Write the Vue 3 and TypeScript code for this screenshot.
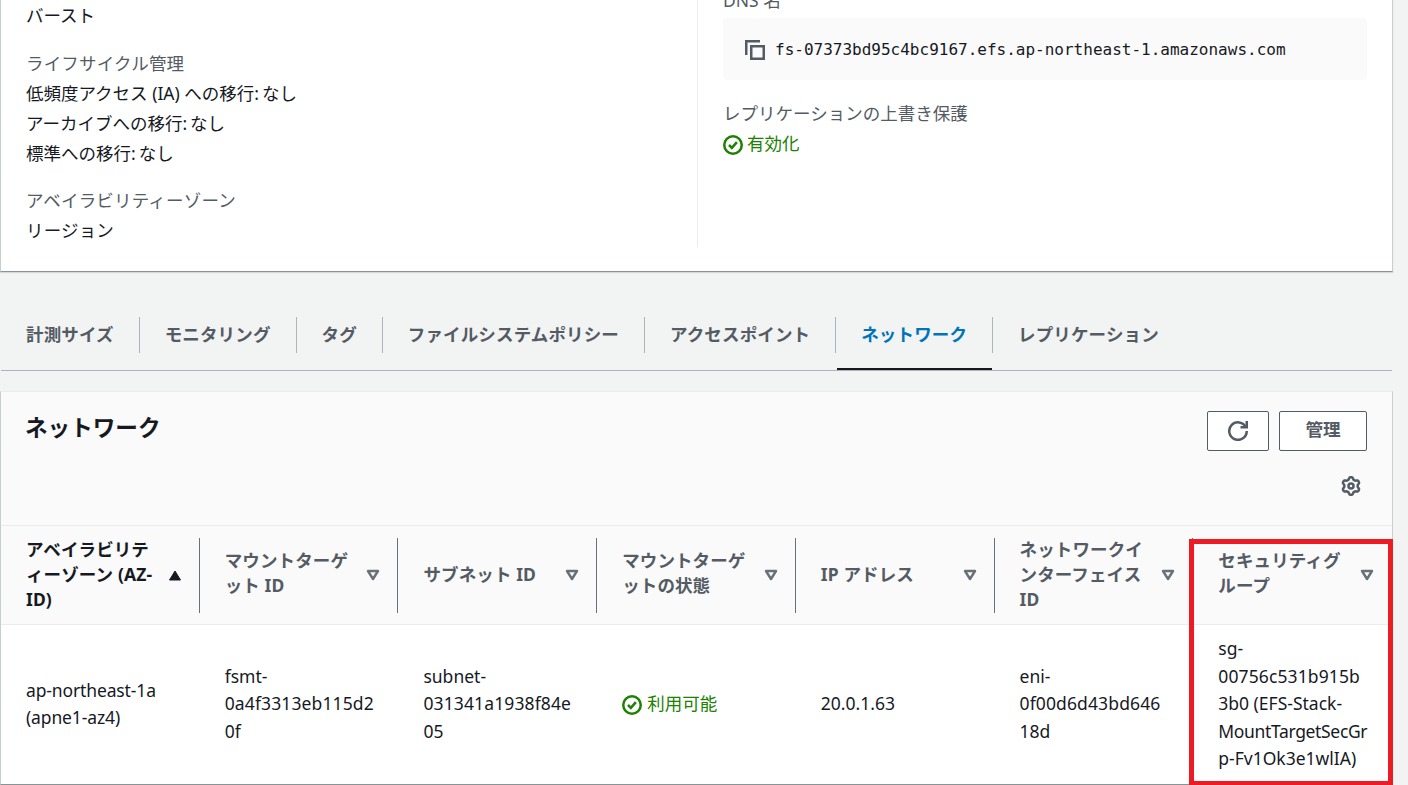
<script setup lang="ts">
interface Column {
  header: string[]
  cell: string[]
  status?: boolean
  sorted?: boolean
}

const tabs: string[] = [
  '計測サイズ', 'モニタリング', 'タグ', 'ファイルシステムポリシー',
  'アクセスポイント', 'ネットワーク', 'レプリケーション',
]
const activeTab = 'ネットワーク'

const columns: Column[] = [
  { header: ['アベイラビリテ', 'ィーゾーン (AZ-', 'ID)'], cell: ['ap-northeast-1a', '(apne1-az4)'], sorted: true },
  { header: ['マウントターゲ', 'ット ID'], cell: ['fsmt-', '0a4f3313eb115d2', '0f'] },
  { header: ['サブネット ID'], cell: ['subnet-', '031341a1938f84e', '05'] },
  { header: ['マウントターゲ', 'ットの状態'], cell: ['利用可能'], status: true },
  { header: ['IP アドレス'], cell: ['20.0.1.63'] },
  { header: ['ネットワークイ', 'ンターフェイス', 'ID'], cell: ['eni-', '0f00d6d43bd646', '18d'] },
  { header: ['セキュリティグ', 'ループ'], cell: ['sg-', '00756c531b915b', '3b0 (EFS-Stack-', 'MountTargetSecGr', 'p-Fv1Ok3e1wlIA)'] },
]

// Hash-like fragments are set slightly wider, letter-heavy names slightly tighter.
const tracking = (line: string): string => {
  if (/^[0-9a-f]{12,}$/.test(line)) return 'wide'
  if (line.startsWith('Mount')) return 'tight'
  if (line.startsWith('ap-') || line.startsWith('(apne')) return 'snug'
  return ''
}

// Outline of the six-lobed settings gear, in a 16-unit box.
const gearPath = (() => {
  const points = Array.from({ length: 72 }, (_, i) => {
    const t = (i * 5 * Math.PI) / 180
    const r = 6.2 + 0.95 * Math.tanh(1.6 * Math.cos(6 * t))
    return `${(8 + r * Math.sin(t)).toFixed(2)} ${(8 - r * Math.cos(t)).toFixed(2)}`
  })
  return `M${points.join('L')}Z`
})()
</script>

<template>
  <main class="page">
    <section class="card details">
      <div class="col left">
        <div class="value">バースト</div>
        <div class="group">
          <div class="label spaced">ライフサイクル管理</div>
          <div class="value">低頻度アクセス (IA) への移行<span class="colon">: </span>なし</div>
          <div class="value">アーカイブへの移行<span class="colon">: </span>なし</div>
          <div class="value">標準への移行<span class="colon">: </span>なし</div>
        </div>
        <div class="group second">
          <div class="label spaced">アベイラビリティーゾーン</div>
          <div class="value spaced">リージョン</div>
        </div>
      </div>
      <div class="col right">
        <div class="label dns">DNS 名</div>
        <div class="code">
          <svg class="icon" viewBox="0 0 16 16"><path d="M1 12V1h11M5 5h10v10H5z" /></svg>
          <span>fs-07373bd95c4bc9167.efs.ap-northeast-1.amazonaws.com</span>
        </div>
        <div class="label protect">レプリケーションの上書き保護</div>
        <div class="ok upper">
          <svg class="icon" viewBox="0 0 16 16"><circle cx="8" cy="8" r="7" /><path d="m4.8 8 2.3 2.3 4-4.6" /></svg>
          <span>有効化</span>
        </div>
      </div>
    </section>

    <nav class="tabs">
      <div v-for="t in tabs" :key="t" class="tab" :class="{ active: t === activeTab }"><span>{{ t }}</span></div>
    </nav>

    <section class="card network">
      <header class="head">
        <h2>ネットワーク</h2>
        <div class="tools">
          <div class="buttons">
            <button class="refresh">
              <svg class="icon" viewBox="0 0 16 16"><path d="M10 5h5V0" /><path d="M15 8a7 7 0 1 1-.7-3" /></svg>
            </button>
            <button class="manage">管理</button>
          </div>
          <svg class="icon gear" viewBox="0 0 16 16"><path :d="gearPath" /><circle cx="8" cy="8" r="2" /></svg>
        </div>
      </header>
      <div class="grid header-row">
        <div v-for="(c, i) in columns" :key="i" class="th" :class="{ sorted: c.sorted }">
          <div class="lines" :class="{ double: c.header.length === 2 }"><div v-for="l in c.header" :key="l">{{ l }}</div></div>
          <svg v-if="c.sorted" class="caret up" viewBox="0 0 14 12"><path d="M7 2 12.5 11h-11z" /></svg>
          <svg v-else class="caret" viewBox="0 0 14 12"><path d="M2 2h10L7 10z" /></svg>
        </div>
      </div>
      <div class="grid body-row">
        <div v-for="(c, i) in columns" :key="i" class="td">
          <div v-if="c.status" class="ok">
            <svg class="icon" viewBox="0 0 16 16"><circle cx="8" cy="8" r="7" /><path d="m4.8 8 2.3 2.3 4-4.6" /></svg>
            <span>{{ c.cell[0] }}</span>
          </div>
          <div v-else class="lines"><div v-for="l in c.cell" :key="l" :class="tracking(l)">{{ l }}</div></div>
        </div>
      </div>
    </section>
    <div class="highlight"></div>
  </main>
</template>

<style>
body {
  background: #f2f3f3;
  overflow: hidden;
}
</style>

<style scoped>
.page {
  position: relative;
  box-sizing: border-box;
  width: 1408px;
  height: 785px;
  overflow: hidden;
  background: #f2f3f3;
  color: #16191f;
  font: 17.5px/30px "Noto Sans", "Noto Sans CJK JP", sans-serif;
  white-space: nowrap;
}
.card {
  box-sizing: border-box;
  width: 1393px;
  background: #fff;
  border: solid #c9cece;
  border-width: 0 1px;
}
.details {
  display: flex;
  height: 272px;
  border-bottom: 1px solid #879596;
  box-shadow: 0 1px 1px #d5d9d9;
}
.col {
  box-sizing: border-box;
  height: 247px;
}
.left {
  width: 697px;
  padding-left: 25px;
  border-right: 1px solid #eaeded;
}
.right {
  width: 669px;
  padding-left: 25px;
}
.label {
  color: #545b64;
}
.spaced {
  letter-spacing: 0.18px;
}
.colon {
  letter-spacing: -0.8px;
}
.group {
  margin-top: 18px;
}
.group.second {
  margin-top: 17px;
}
.dns {
  margin-top: -15px;
}
.code {
  display: flex;
  align-items: center;
  gap: 10px;
  box-sizing: border-box;
  height: 62px;
  margin-top: 3px;
  padding: 2px 22px 0;
  border-radius: 4px;
  background: #fafafa;
  font: 16px/30px "DejaVu Sans Mono", monospace;
}
.protect {
  margin-top: 18px;
}
.icon {
  flex: none;
  width: 20px;
  height: 20px;
  fill: none;
  stroke: #545b64;
  stroke-width: 2;
}
.ok {
  display: flex;
  align-items: center;
  gap: 5px;
  color: #1d8102;
}
.ok .icon {
  stroke: #1d8102;
}
.ok span {
  margin-top: -2px;
}
.ok.upper .icon {
  margin-top: 4px;
}
.ok.upper span {
  margin: 0 0 0 -1px;
}
.tabs {
  display: flex;
  box-sizing: border-box;
  width: 1391px;
  height: 54px;
  margin: 45px 0 0 1px;
  border-bottom: 1px solid #aeb3b7;
  color: #545b64;
  font-weight: 700;
  letter-spacing: 0.14px;
}
.tab {
  position: relative;
  height: 36px;
  line-height: 34px;
  padding: 0 25px;
  border-right: 1px solid #aab7b8;
}
.tab:last-child {
  border: 0;
}
.tab.active {
  color: #0073bb;
}
.tab.active::after {
  content: "";
  position: absolute;
  left: 1px;
  right: 0;
  bottom: -17px;
  height: 2px;
  background: #16191f;
}
.network {
  height: 394px;
  margin-top: 20px;
  border-top: 1px solid #eaeded;
  border-bottom: 1px solid #879596;
}
.head {
  display: flex;
  justify-content: space-between;
  box-sizing: border-box;
  height: 134px;
  padding: 19px 25px 0 24px;
  border-bottom: 1px solid #eaeded;
  background: #fafafa;
}
h2 {
  margin: 0;
  font-size: 22.6px;
  line-height: 34px;
}
.tools {
  display: flex;
  flex-direction: column;
  align-items: flex-end;
}
.buttons {
  display: flex;
  gap: 10px;
}
button {
  display: flex;
  align-items: center;
  justify-content: center;
  box-sizing: border-box;
  height: 40px;
  padding: 0 0 5px;
  border: 1px solid #545b64;
  border-radius: 2px;
  background: #fff;
  color: #545b64;
  font: 700 17.6px/30px "Noto Sans", "Noto Sans CJK JP", sans-serif;
}
.refresh {
  width: 62px;
  padding: 0;
}
.manage {
  width: 88px;
}
.gear {
  margin: 25px 6px 0 0;
}
.grid {
  display: grid;
  grid-template-columns: repeat(7, 1fr);
}
.header-row {
  height: 98px;
  border-bottom: 1px solid #eaeded;
  background: #fafafa;
  font-weight: 700;
  line-height: 25px;
  letter-spacing: 0.12px;
  color: #545b64;
}
.th {
  display: flex;
  align-items: center;
  justify-content: space-between;
  min-width: 0;
  height: 75px;
  margin-top: 12px;
  padding: 0 17px 0 25px;
  border-right: 1px solid #687078;
}
.th:last-child {
  border-color: transparent;
}
.sorted {
  color: #16191f;
}
.lines {
  width: 0;
}
.th .lines {
  margin-top: -3px;
}
.th .lines.double {
  margin-top: -5px;
}
.wide {
  letter-spacing: 0.12px;
}
.tight {
  letter-spacing: -0.34px;
}
.snug {
  letter-spacing: -0.13px;
}
.caret {
  flex: none;
  width: 14px;
  height: 12px;
  margin-top: -1px;
  fill: none;
  stroke: #687078;
  stroke-width: 2.4;
  stroke-linejoin: round;
}
.caret.up {
  margin-top: -2px;
  fill: #16191f;
  stroke: #16191f;
  stroke-width: 1;
}
.body-row {
  height: 159px;
  line-height: 27.5px;
}
.td {
  display: flex;
  align-items: center;
  min-width: 0;
  padding-left: 25px;
}
.td .lines {
  margin-top: -1px;
}
.highlight {
  position: absolute;
  box-sizing: border-box;
  left: 1189px;
  top: 539px;
  width: 204px;
  height: 247px;
  border: 5px solid #ed1c24;
}
</style>
